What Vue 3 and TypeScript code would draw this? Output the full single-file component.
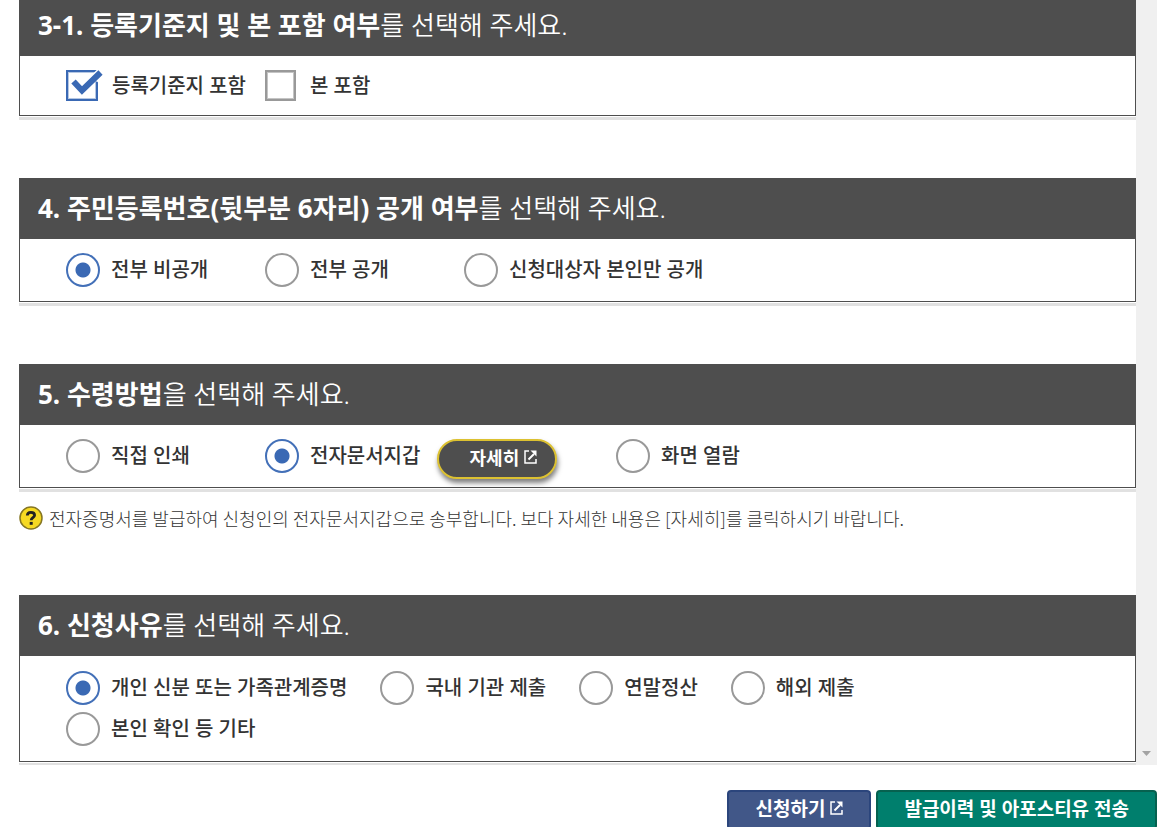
<script setup lang="ts">
import { reactive } from 'vue'

interface Choice {
  id: string
  label: string
  detail?: boolean
}

interface Section {
  id: string
  strong: string
  rest: string
  type: 'checkbox' | 'radio'
  choices: Choice[]
  note?: string
}

const sections: Section[] = [
  {
    id: 'include',
    strong: '3-1. 등록기준지 및 본 포함 여부',
    rest: '를 선택해 주세요.',
    type: 'checkbox',
    choices: [
      { id: 'base', label: '등록기준지 포함' },
      { id: 'origin', label: '본 포함' },
    ],
  },
  {
    id: 'number',
    strong: '4. 주민등록번호(뒷부분 6자리) 공개 여부',
    rest: '를 선택해 주세요.',
    type: 'radio',
    choices: [
      { id: 'hidden', label: '전부 비공개' },
      { id: 'open', label: '전부 공개' },
      { id: 'self', label: '신청대상자 본인만 공개' },
    ],
  },
  {
    id: 'receive',
    strong: '5. 수령방법',
    rest: '을 선택해 주세요.',
    type: 'radio',
    choices: [
      { id: 'print', label: '직접 인쇄' },
      { id: 'wallet', label: '전자문서지갑', detail: true },
      { id: 'screen', label: '화면 열람' },
    ],
    note: '전자증명서를 발급하여 신청인의 전자문서지갑으로 송부합니다. 보다 자세한 내용은 [자세히]를 클릭하시기 바랍니다.',
  },
  {
    id: 'reason',
    strong: '6. 신청사유',
    rest: '를 선택해 주세요.',
    type: 'radio',
    choices: [
      { id: 'personal', label: '개인 신분 또는 가족관계증명' },
      { id: 'domestic', label: '국내 기관 제출' },
      { id: 'tax', label: '연말정산' },
      { id: 'overseas', label: '해외 제출' },
      { id: 'other', label: '본인 확인 등 기타' },
    ],
  },
]

const selected = reactive<Record<string, string[] | string>>({
  include: ['base'],
  number: 'hidden',
  receive: 'wallet',
  reason: 'personal',
})
</script>

<template>
  <main class="page">
    <div class="viewport">
      <form class="sections">
        <section v-for="s in sections" :key="s.id" class="section">
          <div class="card">
            <h2 :id="s.id + '-title'" class="title"><strong>{{ s.strong }}</strong>{{ s.rest }}</h2>
            <div class="choices" :class="[s.type, s.id]" role="group" :aria-labelledby="s.id + '-title'">
              <div v-for="c in s.choices" :key="c.id" class="choice" :class="{ wide: c.detail }">
                <span class="control">
                  <input
                    v-if="s.type === 'checkbox'"
                    :id="s.id + '-' + c.id"
                    v-model="selected[s.id]"
                    type="checkbox"
                    :value="c.id"
                  />
                  <input
                    v-else
                    :id="s.id + '-' + c.id"
                    v-model="selected[s.id]"
                    type="radio"
                    :name="s.id"
                    :value="c.id"
                  />
                  <svg v-if="s.type === 'checkbox'" class="tick" viewBox="0 0 38 34" aria-hidden="true">
                    <path d="M28 9L36 1" fill="none" stroke="#fff" stroke-width="9" />
                    <path d="M7.500 11.500L16 20.500L34.500 2.500" fill="none" stroke="#3a69b4" stroke-width="6" />
                  </svg>
                </span>
                <label :for="s.id + '-' + c.id">{{ c.label }}</label>
                <button v-if="c.detail" type="button" class="detail">
                  자세히
                  <svg class="external" viewBox="0 0 13 14" aria-hidden="true">
                    <path d="M5 1H1V13H12V9" />
                    <path d="M4.500 9.500L10 4" stroke-width="2" />
                    <path class="head" d="M6.500 0.500H12.500V6.500Z" />
                  </svg>
                </button>
              </div>
            </div>
          </div>
          <p v-if="s.note" class="note">
            <svg class="help" viewBox="0 0 24 24" aria-hidden="true">
              <circle cx="12" cy="12" r="11" fill="#f6d922" stroke="#857623" stroke-width="1.500" />
              <path d="M8.300 9.600C8.300 7.200 9.700 6.300 11.900 6.300C14.200 6.300 15.600 7.400 15.600 9.200C15.600 11.700 12.200 11.700 12.200 14.300" fill="none" stroke="#222" stroke-width="2.800" />
              <rect x="10.700" y="15.900" width="3" height="2.900" fill="#222" />
            </svg>
            <span>{{ s.note }}</span>
          </p>
        </section>
      </form>
      <div class="track" aria-hidden="true">
        <svg viewBox="0 0 9 5"><path d="M0 0H9L4.500 5Z" fill="#a3a3a3" /></svg>
      </div>
    </div>
    <div class="actions">
      <button type="button" class="apply">
        신청하기
        <svg class="external" viewBox="0 0 13 14" aria-hidden="true">
          <path d="M5 1H1V13H12V9" />
          <path d="M4.500 9.500L10 4" stroke-width="2" />
          <path class="head" d="M6.500 0.500H12.500V6.500Z" />
        </svg>
      </button>
      <button type="button" class="history">발급이력 및 아포스티유 전송</button>
    </div>
  </main>
</template>

<style>
body {
  background: #fff;
  overflow: hidden;
}
</style>

<style scoped>
.page {
  padding: 0 11px 0 19px;
  color: #333;
  font-family: "Noto Sans", "Noto Sans CJK KR", sans-serif;
}
.viewport {
  display: flex;
  overflow: hidden;
}
.sections {
  flex: 1;
  min-width: 0;
  margin-top: -5px;
  padding-bottom: 3px;
}
.section + .section {
  margin-top: 62px;
}
.section:last-child {
  margin-top: 65px;
}
.card {
  border: 1px solid #4e4e4e;
  border-top: 0;
  box-shadow: 0 1px #fff, 0 4px #e1e1e1;
}
.title {
  margin: 0;
  padding: 0 18px;
  background: #4e4e4e;
  color: #fff;
  font-size: 26px;
  font-weight: 350;
  line-height: 61px;
}
.title strong {
  font-weight: 700;
}
.choices {
  display: flex;
  flex-wrap: wrap;
  gap: 7px 29px;
  padding: 14px 46px;
}
.choices.checkbox {
  gap: 7px 19px;
}
.choices.reason {
  gap: 7px 33px;
  padding: 15px 140px 15px 46px;
}
.choice {
  display: flex;
  align-items: center;
  gap: 11px;
  font-size: 20px;
  font-weight: 500;
  line-height: 30px;
}
.number .choice,
.receive .choice {
  min-width: 170px;
}
.receive .choice.wide {
  min-width: 322px;
}
.checkbox .choice {
  gap: 14px;
}
.control {
  position: relative;
  display: flex;
}
input {
  appearance: none;
  box-sizing: border-box;
  margin: 0;
  background: #fff;
}
input[type="radio"] {
  width: 34px;
  height: 34px;
  border: 2px solid #999;
  border-radius: 50%;
}
input[type="radio"]:checked {
  border-color: #4370b8;
  background: radial-gradient(circle, #3a69b4 7px, #fff 8px);
}
input[type="checkbox"] {
  width: 31px;
  height: 31px;
  border: 2px solid #999;
  box-shadow: inset 0 0 0 1px #c4c4c4;
}
input[type="checkbox"]:checked {
  width: 32px;
  border-color: #3a69b4;
  box-shadow: inset 0 0 0 1px #b5c7e3;
}
.tick {
  display: none;
  position: absolute;
  left: 0;
  top: 0;
  width: 38px;
  height: 34px;
  pointer-events: none;
}
input:checked + .tick {
  display: block;
}
label {
  white-space: nowrap;
}
button {
  box-sizing: border-box;
  display: flex;
  align-items: center;
  justify-content: center;
  gap: 5px;
  color: #fff;
  font-family: inherit;
  font-weight: 700;
  white-space: nowrap;
}
.detail {
  width: 120px;
  height: 40px;
  margin: 0 0 -6px 6px;
  align-self: flex-start;
  padding: 0 18px 4px 30px;
  border: 2px solid #dcc131;
  border-radius: 20px;
  background: #4e4e4e;
  box-shadow: 1px 4px 5px rgba(0, 0, 0, 0.5);
  font-size: 18px;
}
.external {
  width: 13px;
  height: 14px;
  fill: none;
  stroke: currentColor;
  stroke-width: 1.500;
}
.external .head {
  fill: currentColor;
  stroke: none;
}
.note {
  display: flex;
  align-items: center;
  gap: 6px;
  margin: 18px 0 0;
  font-family: "Noto Sans CJK KR", sans-serif;
  font-size: 18px;
  font-weight: 300;
  line-height: 24px;
}
.help {
  flex: none;
  width: 24px;
  height: 24px;
}
.track {
  display: flex;
  align-items: flex-end;
  justify-content: center;
  width: 21px;
  padding-bottom: 9px;
  box-sizing: border-box;
  background: #f0f0f0;
}
.track svg {
  width: 9px;
  height: 5px;
}
.actions {
  display: flex;
  justify-content: flex-end;
  gap: 5px;
  margin-top: 25px;
}
.actions button {
  height: 40px;
  padding: 0 26px 4px;
  border: 2px solid #2b457c;
  border-radius: 4px;
  background: #415788;
  font-size: 19px;
}
.actions .history {
  border-color: #06614f;
  background: #007f6d;
}
</style>
